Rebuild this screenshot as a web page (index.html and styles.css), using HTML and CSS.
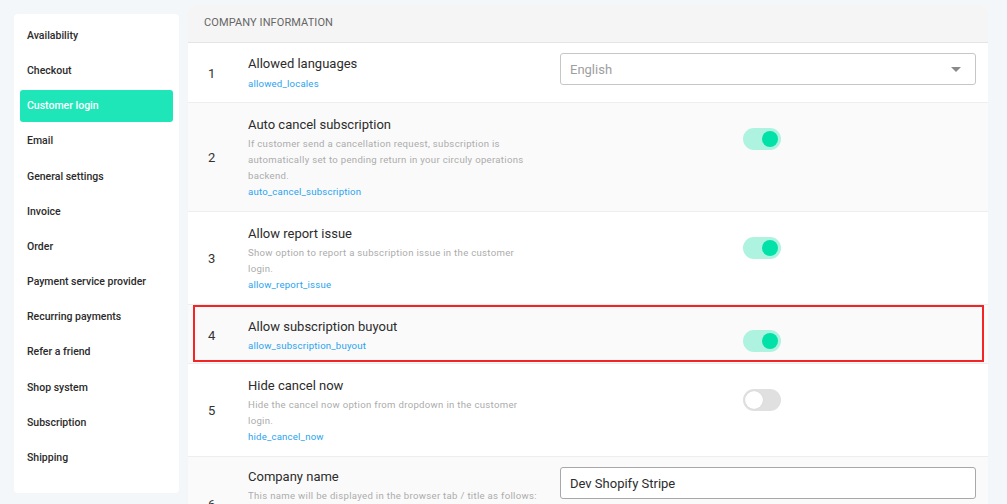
FILE: index.html
```html
<!DOCTYPE html>
<html>
<head>
<meta charset="utf-8">
<link rel="stylesheet" href="styles.css">
</head>
<body>
<div class="page">
  <nav class="sidebar">
    <div class="nav-item">Availability</div>
    <div class="nav-item">Checkout</div>
    <div class="nav-item active">Customer login</div>
    <div class="nav-item">Email</div>
    <div class="nav-item">General settings</div>
    <div class="nav-item">Invoice</div>
    <div class="nav-item">Order</div>
    <div class="nav-item">Payment service provider</div>
    <div class="nav-item">Recurring payments</div>
    <div class="nav-item">Refer a friend</div>
    <div class="nav-item">Shop system</div>
    <div class="nav-item">Subscription</div>
    <div class="nav-item">Shipping</div>
  </nav>
  <main class="card">
    <div class="card-header">COMPANY INFORMATION</div>

    <div class="row first">
      <div class="num">1</div>
      <div class="info">
        <div class="title">Allowed languages</div>
        <div class="key">allowed_locales</div>
      </div>
      <div class="control">
        <div class="select">
          <span class="placeholder">English</span>
          <span class="caret"></span>
        </div>
      </div>
    </div>

    <div class="row alt">
      <div class="num">2</div>
      <div class="info">
        <div class="title">Auto cancel subscription</div>
        <div class="desc">If customer send a cancellation request, subscription is automatically set to pending return in your circuly operations backend.</div>
        <div class="key">auto_cancel_subscription</div>
      </div>
      <div class="control">
        <div class="toggle on"><span class="knob"></span></div>
      </div>
    </div>

    <div class="row">
      <div class="num">3</div>
      <div class="info">
        <div class="title">Allow report issue</div>
        <div class="desc">Show option to report a subscription issue in the customer login.</div>
        <div class="key">allow_report_issue</div>
      </div>
      <div class="control">
        <div class="toggle on"><span class="knob"></span></div>
      </div>
    </div>

    <div class="row alt short highlight">
      <div class="num">4</div>
      <div class="info">
        <div class="title">Allow subscription buyout</div>
        <div class="key">allow_subscription_buyout</div>
      </div>
      <div class="control">
        <div class="toggle on"><span class="knob"></span></div>
      </div>
    </div>

    <div class="row">
      <div class="num">5</div>
      <div class="info">
        <div class="title">Hide cancel now</div>
        <div class="desc">Hide the cancel now option from dropdown in the customer login.</div>
        <div class="key">hide_cancel_now</div>
      </div>
      <div class="control">
        <div class="toggle"><span class="knob"></span></div>
      </div>
    </div>

    <div class="row alt last">
      <div class="num">6</div>
      <div class="info">
        <div class="title">Company name</div>
        <div class="desc">This name will be displayed in the browser tab / title as follows:</div>
      </div>
      <div class="control">
        <div class="input">Dev Shopify Stripe</div>
      </div>
    </div>
  </main>
</div>
</body>
</html>
```

FILE: styles.css
```css
* { box-sizing: border-box; }
html, body {
  margin: 0;
  padding: 0;
  background: #f4f7fa;
  font-family: Roboto, "Liberation Sans", sans-serif;
  overflow: hidden;
}
.page {
  display: flex;
  align-items: flex-start;
  gap: 9px;
  padding-left: 14px;
  height: 504px;
  overflow: hidden;
}
.sidebar {
  width: 165px;
  margin-top: 14px;
  background: #fff;
  border-radius: 4px;
  padding: 6px 6px 19px;
  display: flex;
  flex-direction: column;
  gap: 3.17px;
}
.nav-item {
  height: 32px;
  line-height: 32px;
  padding-left: 7px;
  font-size: 10.5px;
  font-weight: 500;
  color: #2b2b2b;
  border-radius: 3px;
  white-space: nowrap;
}
.nav-item.active {
  background: #1fe6b9;
  color: #fff;
}
.card {
  width: 800px;
  margin-top: 5px;
  background: #fff;
  border-radius: 6px 6px 0 0;
  overflow: hidden;
}
.card-header {
  height: 38px;
  line-height: 36px;
  padding-left: 16px;
  background: #f5f5f5;
  border-bottom: 1px solid #e4e4e4;
  font-size: 11px;
  color: #666;
  letter-spacing: 0.1px;
}
.row {
  position: relative;
  display: grid;
  grid-template-columns: 60px 292px 1fr;
  padding: 12px 0 11px;
  border-bottom: 1px solid #eeeeee;
  background: #fff;
}
.row.first { padding: 11px 0 10px; }
.row.short { padding: 12px 0 9px; }
.row.last { padding-top: 10px; min-height: 96px; }
.row.alt { background: #fafafa; }
.row .control { margin: 0 12px 0 20px; }
.row.first .control { margin-top: -1px; }
.row.highlight::after {
  content: "";
  position: absolute;
  top: 0;
  bottom: 1px;
  left: 5px;
  right: 4px;
  border: 2px solid #f52424;
  pointer-events: none;
}
.num {
  align-self: center;
  padding-left: 20px;
  font-size: 13px;
  color: #333;
}
.info { min-width: 0; }
.title {
  font-size: 13px;
  line-height: 20px;
  color: #2c2c2c;
}
.desc {
  font-size: 9.6px;
  line-height: 16px;
  color: #acacac;
  letter-spacing: 0.3px;
  margin-top: 1px;
}
.key {
  font-size: 9.6px;
  line-height: 16px;
  color: #2aa3ef;
  letter-spacing: 0.2px;
}
.row.first .key { margin-top: 2px; }
.row.short .key { margin-top: 1px; }
.select, .input {
  height: 32px;
  border: 1px solid #c6c6c6;
  border-radius: 3px;
  background: #fff;
  display: flex;
  align-items: center;
  padding: 0 9px;
  font-size: 13px;
}
.placeholder { color: #9e9e9e; flex: 1; }
.caret {
  width: 0; height: 0;
  border-left: 5px solid transparent;
  border-right: 5px solid transparent;
  border-top: 5px solid #8a8a8a;
  margin-right: 5px;
}
.input { color: #2c2c2c; border-color: #a8a8a8; }
.toggle {
  position: relative;
  width: 38px;
  height: 22px;
  border-radius: 11px;
  background: #e0e0e0;
  margin-left: 183px;
  margin-top: 13px;
}
.toggle .knob {
  position: absolute;
  top: 2px;
  left: 2px;
  width: 18px;
  height: 18px;
  border-radius: 50%;
  background: #fff;
  box-shadow: 0 0 1px rgba(0,0,0,0.15);
}
.toggle.on { background: #aef3df; }
.toggle.on .knob {
  top: 3px;
  left: auto;
  right: 3px;
  width: 16px;
  height: 16px;
  background: #02e1a8;
  box-shadow: none;
}
```
